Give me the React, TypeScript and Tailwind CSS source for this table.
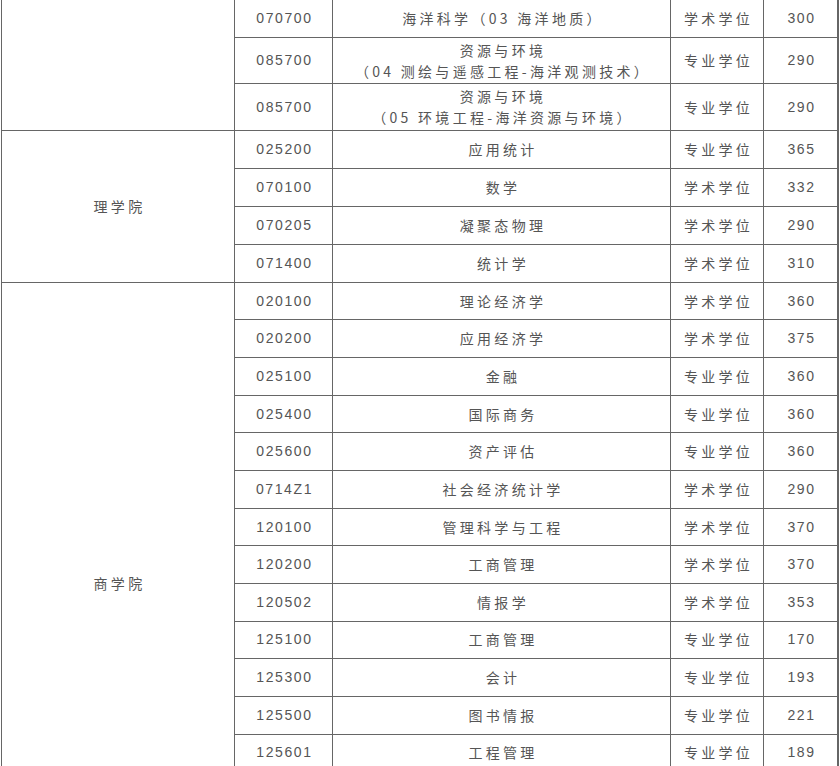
import React from "react";

type Row = { code: string; name: string | string[]; type: string; score: string };

const rows: Row[] = [
  { code: "070700", name: "海洋科学（03 海洋地质）", type: "学术学位", score: "300" },
  { code: "085700", name: ["资源与环境", "（04 测绘与遥感工程-海洋观测技术）"], type: "专业学位", score: "290" },
  { code: "085700", name: ["资源与环境", "（05 环境工程-海洋资源与环境）"], type: "专业学位", score: "290" },
  { code: "025200", name: "应用统计", type: "专业学位", score: "365" },
  { code: "070100", name: "数学", type: "学术学位", score: "332" },
  { code: "070205", name: "凝聚态物理", type: "学术学位", score: "290" },
  { code: "071400", name: "统计学", type: "学术学位", score: "310" },
  { code: "020100", name: "理论经济学", type: "学术学位", score: "360" },
  { code: "020200", name: "应用经济学", type: "学术学位", score: "375" },
  { code: "025100", name: "金融", type: "专业学位", score: "360" },
  { code: "025400", name: "国际商务", type: "专业学位", score: "360" },
  { code: "025600", name: "资产评估", type: "专业学位", score: "360" },
  { code: "0714Z1", name: "社会经济统计学", type: "学术学位", score: "290" },
  { code: "120100", name: "管理科学与工程", type: "学术学位", score: "370" },
  { code: "120200", name: "工商管理", type: "学术学位", score: "370" },
  { code: "120502", name: "情报学", type: "学术学位", score: "353" },
  { code: "125100", name: "工商管理", type: "专业学位", score: "170" },
  { code: "125300", name: "会计", type: "专业学位", score: "193" },
  { code: "125500", name: "图书情报", type: "专业学位", score: "221" },
  { code: "125601", name: "工程管理", type: "专业学位", score: "189" },
];

const cjk = "font-['Noto_Sans_CJK_SC',sans-serif] text-[14px] tracking-[3.3px] text-[#555]";
const num = "font-['Liberation_Sans',sans-serif] text-[14px] tracking-[1.6px] text-[#555]";

export default function App() {
  return (
    <div className="w-[840px] h-[766px] overflow-hidden bg-white">
      <div className="ml-px w-[838px] bg-[#666] grid gap-px px-px pb-px grid-cols-[232px_97px_337px_92px_73px] grid-rows-[36.8px_45.7px_45.7px_37.3px_36.7px_36.6px_37px_repeat(13,36.67px)]">
        <div className="bg-white [grid-column:1] [grid-row:1/4]" />
        <div className={`bg-white [grid-column:1] [grid-row:4/8] flex items-center justify-center ${cjk}`}>
          <span className="pl-[3px]">理学院</span>
        </div>
        <div className={`bg-white [grid-column:1] [grid-row:8/21] flex items-center justify-center pt-[112px] ${cjk}`}>
          <span className="pl-[3px]">商学院</span>
        </div>
        {rows.map((r, i) => (
          <React.Fragment key={i}>
            <div className={`bg-white flex items-center justify-center ${num}`}>
              <span className="pl-[2px]">{r.code}</span>
            </div>
            <div className={`bg-white flex flex-col items-center justify-center ${cjk}`}>
              {Array.isArray(r.name) ? (
                r.name.map((l, j) => (
                  <span key={j} className="leading-[21px] pl-[3px]">
                    {l}
                  </span>
                ))
              ) : (
                <span className="pl-[3px]">{r.name}</span>
              )}
            </div>
            <div className={`bg-white flex items-center justify-center ${cjk}`}>
              <span className="pl-[3px]">{r.type}</span>
            </div>
            <div className={`bg-white flex items-center justify-center ${num}`}>
              <span className="pl-[2px]">{r.score}</span>
            </div>
          </React.Fragment>
        ))}
      </div>
    </div>
  );
}
